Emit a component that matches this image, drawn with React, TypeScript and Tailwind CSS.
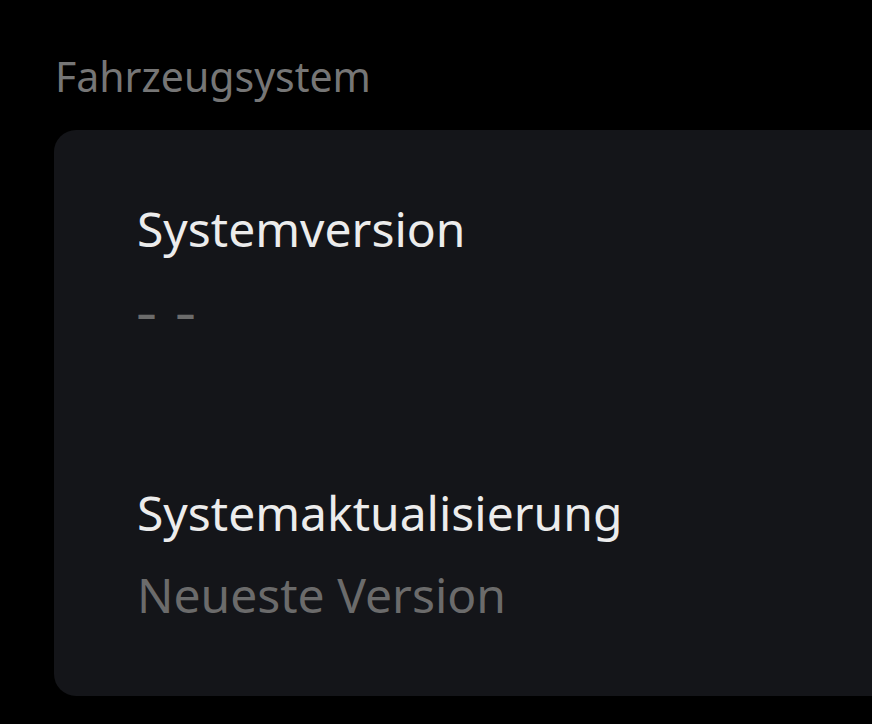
export default function App() {
  return (
    <div className="w-[872px] h-[724px] bg-black overflow-hidden" style={{ fontFamily: '"Noto Sans", sans-serif' }}>
      <div className="pt-[51px] pl-[55px] text-[41px] leading-[50px] text-[#767676]">Fahrzeugsystem</div>
      <div className="ml-[54px] mt-[29px] w-[900px] h-[566px] rounded-[22px] bg-[#141519] pl-[83px] pt-[69px]">
        <div className="text-[48px] leading-[60px] text-[#ececec]">Systemversion</div>
        <div className="mt-[43px] text-[38px] leading-[20px] font-bold tracking-[5px] text-[#6b6b6b]">– –</div>
        <div className="mt-[161px] text-[48px] leading-[60px] text-[#ececec]">Systemaktualisierung</div>
        <div className="mt-[22px] text-[48px] leading-[60px] text-[#6b6b6b]">Neueste Version</div>
      </div>
    </div>
  )
}
